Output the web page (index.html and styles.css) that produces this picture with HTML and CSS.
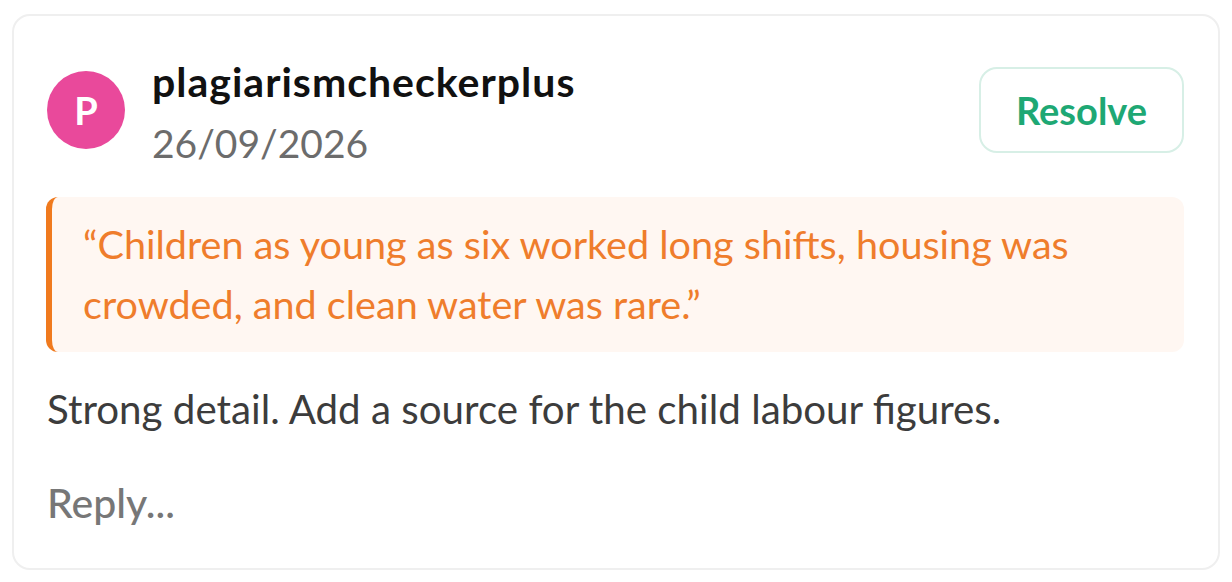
FILE: index.html
```html
<!DOCTYPE html>
<html lang="en">
<head>
<meta charset="utf-8">
<title>Comment</title>
<link rel="stylesheet" href="styles.css">
</head>
<body>
<div class="card">
  <div class="header">
    <div class="author">
      <div class="avatar">P</div>
      <div class="meta">
        <div class="name">plagiarismcheckerplus</div>
        <div class="date">26/09/2026</div>
      </div>
    </div>
    <button class="resolve">Resolve</button>
  </div>
  <div class="quote">“Children as young as six worked long shifts, housing was crowded, and clean water was rare.”</div>
  <div class="comment">Strong detail. Add a source for the child labour figures.</div>
  <div class="reply">Reply...</div>
</div>
</body>
</html>
```
FILE: styles.css
```css
html, body { background: #ffffff; }
body {
  margin: 0;
  padding: 14px 12px 12px 12px;
  font-family: Lato, "Noto Sans", sans-serif;
}
.card {
  border: 2px solid #efefef;
  border-radius: 18px;
  background: #ffffff;
  padding: 41px 32px 33px 33px;
  height: 556px;
  box-sizing: border-box;
}
.header {
  display: flex;
  align-items: center;
  justify-content: space-between;
}
.author {
  display: flex;
  align-items: center;
  gap: 27px;
}
.avatar {
  width: 78px;
  height: 78px;
  border-radius: 50%;
  background: #e9499b;
  color: #ffffff;
  font-weight: 700;
  font-size: 38px;
  display: flex;
  align-items: center;
  justify-content: center;
  margin-top: -6px;
}
.name {
  font-size: 41px;
  line-height: 50px;
  font-weight: 700;
  letter-spacing: 1px;
  color: #111111;
}
.date {
  font-size: 39px;
  line-height: 50px;
  margin-top: 11px;
  color: #6c6c6c;
}
.resolve {
  font-family: inherit;
  width: 205px;
  height: 86px;
  border: 2px solid #d7efe6;
  border-radius: 18px;
  background: #ffffff;
  color: #1ea874;
  font-size: 38px;
  font-weight: 700;
  margin-top: -6px;
  margin-right: 2px;
}
.quote {
  margin-top: 29px;
  background: #fff7f2;
  border-left: 6px solid #f07a1e;
  border-radius: 12px;
  padding: 17px 30px 18px 31px;
  font-size: 39.6px;
  line-height: 60px;
  color: #ef7d2c;
  margin-left: -1px;
  margin-right: 2px;
}
.comment {
  margin-top: 27px;
  font-size: 40.3px;
  line-height: 60px;
  color: #3c3c3c;
}
.reply {
  margin-top: 34px;
  font-size: 41px;
  line-height: 60px;
  font-weight: 500;
  color: #777777;
}
```
